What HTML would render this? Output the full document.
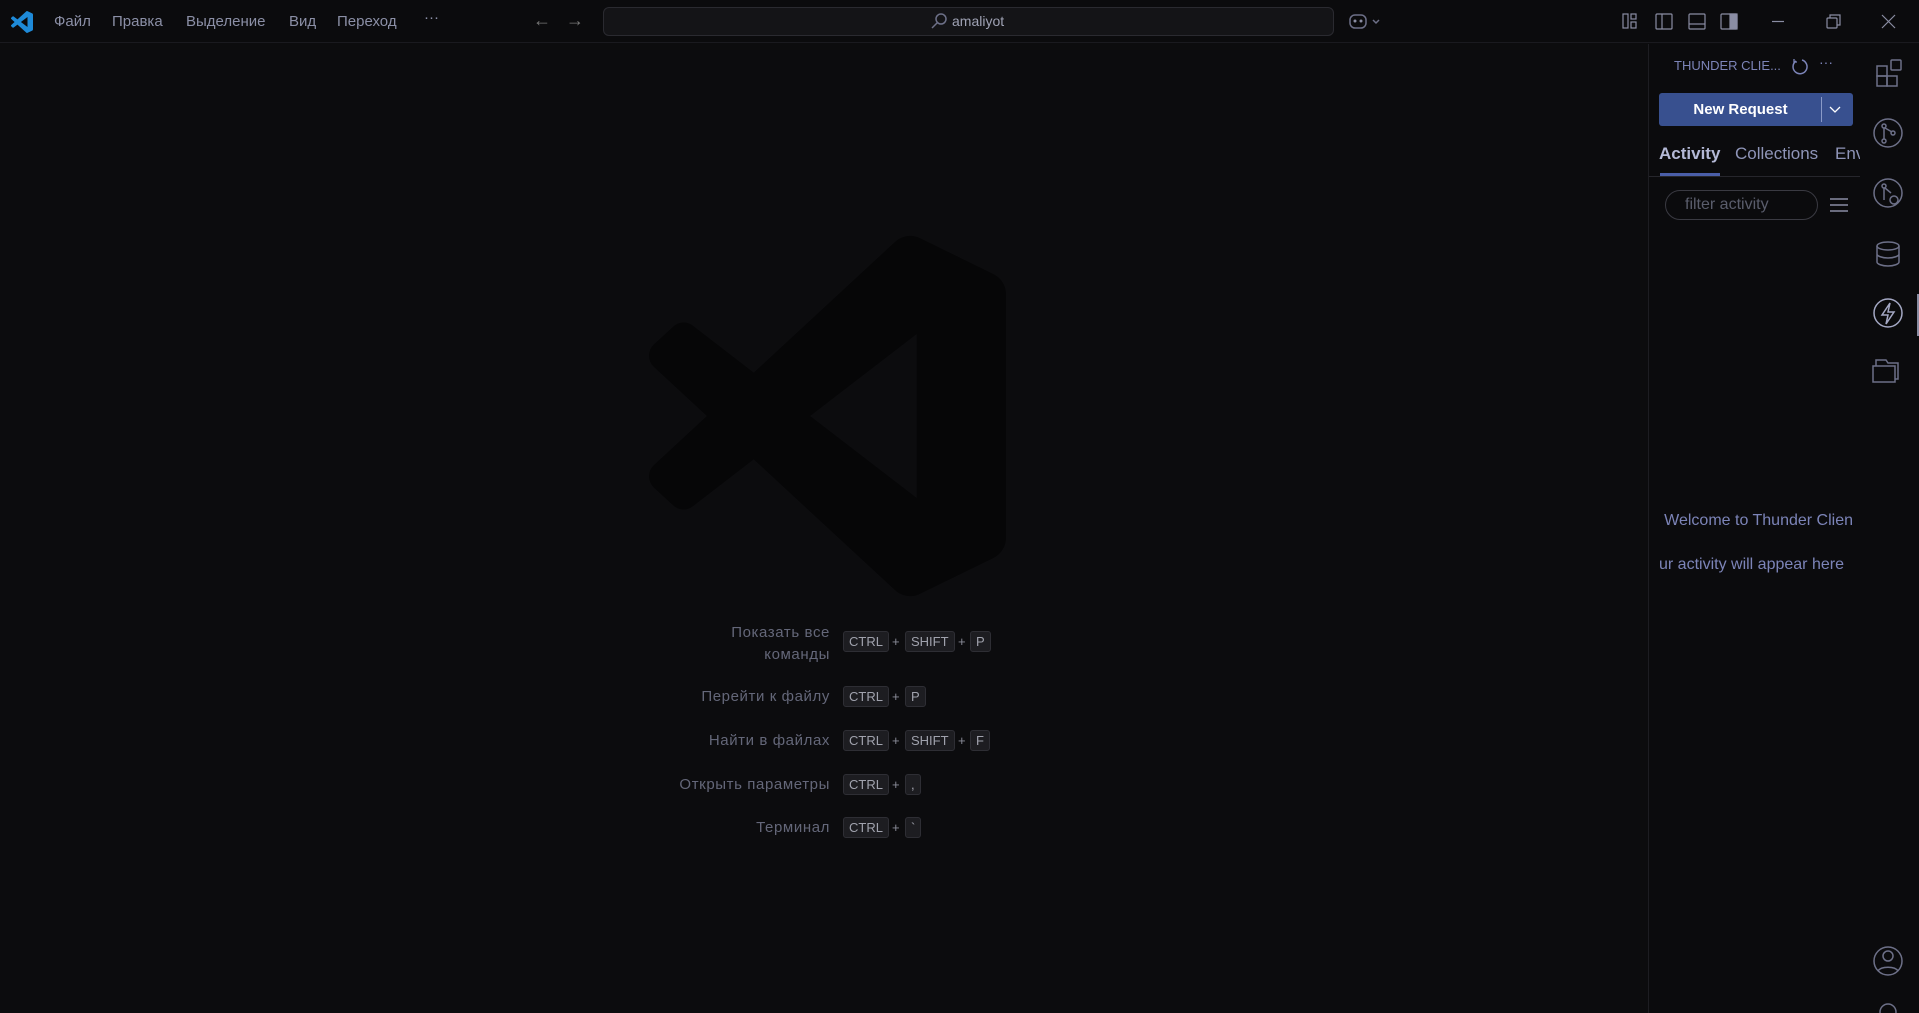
<!DOCTYPE html>
<html><head><meta charset="utf-8"><style>
*{margin:0;padding:0;box-sizing:border-box}
body{width:1919px;height:1013px;background:#0c0c0e;overflow:hidden;position:relative;font-family:"Liberation Sans","DejaVu Sans",sans-serif;color:#8a8da3}
.abs{position:absolute}
.title{left:0;top:0;width:1919px;height:43px;border-bottom:1px solid #1a1a1f;background:#0b0b0d}
.menu{top:13px;font-size:15px;color:#8b8fa6}
.search{left:603px;top:7px;width:731px;height:29px;border:1px solid #2a2a30;border-radius:6px;background:#141417}
.sq{color:#9fa2b4}
.side{left:1648px;top:44px;width:212px;height:969px;border-left:1px solid #1d1d22;background:#0b0b0d;overflow:hidden}
.lbl{font-size:15px;color:#646779;text-align:right;width:300px;left:530px;letter-spacing:.6px}
.key{height:21px;border:1px solid #2e2e34;background:#1d1d21;border-radius:3px;font-size:13px;color:#a0a2ad;padding:0 5px;line-height:19px}
.plus{font-size:13px;color:#8a8c98}
.ico{stroke:#6d7088;fill:none;stroke-width:1.5}
</style></head><body>
<div class="abs title"></div>
<svg class="abs" style="left:11px;top:11px" width="22" height="22" viewBox="0 0 100 100"><path fill="#1e8ad8" d="M96.46 10.8L75.86.87a6.2 6.2 0 0 0-7.1 1.2L29.35 38.04 12.19 25.01a4.15 4.15 0 0 0-5.3.24L1.36 30.26a4.15 4.15 0 0 0 0 6.14L16.24 50 1.36 63.6a4.150 4.15 0 0 0 0 6.14l5.52 5.02a4.15 4.15 0 0 0 5.3.23l17.16-13.03 39.41 35.97a6.2 6.2 0 0 0 7.1 1.2l20.6-9.92A6.25 6.25 0 0 0 100 83.6V16.4a6.25 6.25 0 0 0-3.54-5.6zM75.02 72.7L45.11 50l29.91-22.7z"/></svg>
<div class="abs menu" style="left:54px">Файл</div>
<div class="abs menu" style="left:112px">Правка</div>
<div class="abs menu" style="left:186px">Выделение</div>
<div class="abs menu" style="left:289px">Вид</div>
<div class="abs menu" style="left:337px">Переход</div>
<div class="abs menu" style="left:424px;top:9px">···</div>
<div class="abs menu" style="left:533px;top:10px;font-size:18px;color:#777">←</div>
<div class="abs menu" style="left:566px;top:10px;font-size:18px;color:#777">→</div>
<div class="abs search"></div>
<svg class="abs" style="left:930px;top:12px" width="18" height="18"><circle cx="11" cy="7" r="5" class="ico" stroke="#8a8da3"/><path d="M7.5 10.5L2 16" class="ico" stroke="#8a8da3"/></svg>
<div class="abs sq" style="left:952px;top:13px;font-size:14px">amaliyot</div>
<svg class="abs" style="left:1349px;top:12px" width="40" height="20"><rect x="1" y="3" width="16" height="13" rx="5" class="ico" stroke="#8a8da3"/><circle cx="6" cy="9" r="1.5" fill="#8a8da3"/><circle cx="12" cy="9" r="1.5" fill="#8a8da3"/><path d="M24 8l3 3 3-3" class="ico" stroke="#8a8da3" stroke-width="1"/></svg>
<svg class="abs" style="left:1622px;top:12px" width="290" height="20" fill="none" stroke="#8a8da3" stroke-width="1.2">
<rect x="1" y="2" width="5" height="14"/><rect x="9" y="2" width="5" height="5"/><rect x="9" y="10" width="5" height="6"/>
<rect x="34" y="2" width="16" height="15" rx="1"/><path d="M40 2v15"/>
<rect x="67" y="2" width="16" height="15" rx="1"/><path d="M67 12h16"/>
<rect x="99" y="2" width="16" height="15" rx="1"/><rect x="108" y="2" width="7" height="15" fill="#8a8da3"/>
<path d="M150 9.5h12"/>
<rect x="205" y="6" width="10" height="10" rx="1"/><path d="M208 6V3h10v10h-3"/>
<path d="M260 3l13 13M273 3l-13 13"/>
</svg>
<svg class="abs" style="left:649px;top:235px" width="357" height="362" viewBox="0 0 100 100" preserveAspectRatio="none"><path fill="#060607" d="M96.46 10.8L75.86.87a6.2 6.2 0 0 0-7.1 1.2L29.35 38.04 12.19 25.01a4.15 4.15 0 0 0-5.3.24L1.36 30.26a4.15 4.15 0 0 0 0 6.14L16.24 50 1.36 63.6a4.15 4.15 0 0 0 0 6.14l5.52 5.02a4.15 4.15 0 0 0 5.3.23l17.16-13.03 39.41 35.97a6.2 6.2 0 0 0 7.1 1.2l20.6-9.92A6.25 6.25 0 0 0 100 83.6V16.4a6.25 6.25 0 0 0-3.54-5.6zM75.02 72.7L45.11 50l29.91-22.7z"/></svg>

<div class="abs lbl" style="top:622px;line-height:22px">Показать все<br>команды</div>
<div class="abs key" style="left:843px;top:631px">CTRL</div><div class="abs plus" style="left:892px;top:634px">+</div><div class="abs key" style="left:905px;top:631px">SHIFT</div><div class="abs plus" style="left:958px;top:634px">+</div><div class="abs key" style="left:970px;top:631px">P</div>
<div class="abs lbl" style="top:688px">Перейти к файлу</div>
<div class="abs key" style="left:843px;top:686px">CTRL</div><div class="abs plus" style="left:892px;top:689px">+</div><div class="abs key" style="left:905px;top:686px">P</div>
<div class="abs lbl" style="top:732px">Найти в файлах</div>
<div class="abs key" style="left:843px;top:730px">CTRL</div><div class="abs plus" style="left:892px;top:733px">+</div><div class="abs key" style="left:905px;top:730px">SHIFT</div><div class="abs plus" style="left:958px;top:733px">+</div><div class="abs key" style="left:970px;top:730px">F</div>
<div class="abs lbl" style="top:776px">Открыть параметры</div>
<div class="abs key" style="left:843px;top:774px">CTRL</div><div class="abs plus" style="left:892px;top:777px">+</div><div class="abs key" style="left:905px;top:774px">,</div>
<div class="abs lbl" style="top:819px">Терминал</div>
<div class="abs key" style="left:843px;top:817px">CTRL</div><div class="abs plus" style="left:892px;top:820px">+</div><div class="abs key" style="left:905px;top:817px">`</div>

<div class="abs side">
<div class="abs" style="left:25px;top:14px;font-size:13px;color:#7c84b8">THUNDER CLIE...</div>
<svg class="abs" style="left:141px;top:13px" width="20" height="18"><path d="M6 4a7 7 0 1 0 6-1" stroke="#7c84b8" stroke-width="1.5" fill="none"/><path d="M4 2v3h3" stroke="#7c84b8" stroke-width="1.3" fill="none"/></svg>
<div class="abs" style="left:170px;top:10px;font-size:14px;color:#7c84b8">···</div>
<div class="abs" style="left:10px;top:49px;width:194px;height:33px;background:#38508f;border-radius:3px"></div>
<div class="abs" style="left:10px;top:57px;width:163px;text-align:center;font-size:15px;color:#fff;font-weight:bold">New Request</div>
<div class="abs" style="left:172px;top:53px;width:1px;height:25px;background:#8a9ac8"></div>
<svg class="abs" style="left:178px;top:60px" width="16" height="12"><path d="M3 3l5 5 5-5" stroke="#fff" stroke-width="1.3" fill="none"/></svg>
<div class="abs" style="left:10px;top:100px;font-size:17px;color:#b4b9d6;font-weight:bold">Activity</div>
<div class="abs" style="left:86px;top:100px;font-size:17px;color:#8f95b8">Collections</div>
<div class="abs" style="left:186px;top:100px;font-size:17px;color:#8f95b8">Env</div>
<div class="abs" style="left:11px;top:129px;width:60px;height:3px;background:#4a5ea8"></div>
<div class="abs" style="left:0;top:132px;width:212px;height:1px;background:#26262c"></div>
<div class="abs" style="left:16px;top:146px;width:153px;height:30px;border:1px solid #3a3a42;border-radius:15px"></div>
<div class="abs" style="left:36px;top:152px;font-size:16px;color:#5a5d6c">filter activity</div>
<svg class="abs" style="left:180px;top:153px" width="20" height="16"><path d="M1 2h18M1 8h18M1 14h18" stroke="#8a8da3" stroke-width="1.5"/></svg>
<div class="abs" style="left:-160px;top:468px;width:364px;text-align:right;font-size:16px;color:#7c84b8;white-space:nowrap;overflow:hidden;direction:rtl"><span style="direction:ltr;unicode-bidi:embed">Welcome to Thunder Clien</span></div>
<div class="abs" style="left:10px;top:512px;font-size:16px;color:#7c84b8;white-space:nowrap">ur activity will appear here</div>
</div>
<div class="abs" style="left:1860px;top:44px;width:59px;height:969px;background:#0b0b0d"></div>
<svg class="abs" style="left:1860px;top:44px" width="59" height="969" fill="none" stroke="#6d7088" stroke-width="1.5">
<rect x="17" y="22" width="10" height="10"/><rect x="17" y="32" width="10" height="10"/><rect x="27" y="32" width="10" height="10"/><rect x="31" y="16" width="10" height="10" rx="1"/>
<circle cx="28" cy="89" r="14"/><circle cx="24" cy="82" r="2"/><circle cx="24" cy="97" r="2"/><circle cx="33" cy="89" r="2"/><path d="M24 84v11M25 84l7 4"/>
<circle cx="28" cy="149" r="14"/><circle cx="24" cy="142" r="2"/><path d="M24 144v12M25 144l6 5"/><circle cx="34" cy="156" r="4"/>
<ellipse cx="28" cy="202" rx="11" ry="4"/><path d="M17 202v16c0 2 5 4 11 4s11-2 11-4V202M17 210c0 2 5 4 11 4s11-2 11-4"/>
<circle cx="28" cy="269" r="14" stroke="#a4a8c4"/><path d="M30 259l-8 12h6l-2 9 8-12h-6z" stroke="#a4a8c4"/>
<path d="M13 338h22v-16H13zM16 322v-6h10l2 3h10v16h-3"/>
<circle cx="28" cy="917" r="14"/><circle cx="28" cy="912" r="5"/><path d="M18 927c3-5 17-5 20 0"/>
<circle cx="28" cy="968" r="8"/>
</svg>
<div class="abs" style="left:1917px;top:294px;width:2px;height:42px;background:#8a8da3"></div>
</body></html>
